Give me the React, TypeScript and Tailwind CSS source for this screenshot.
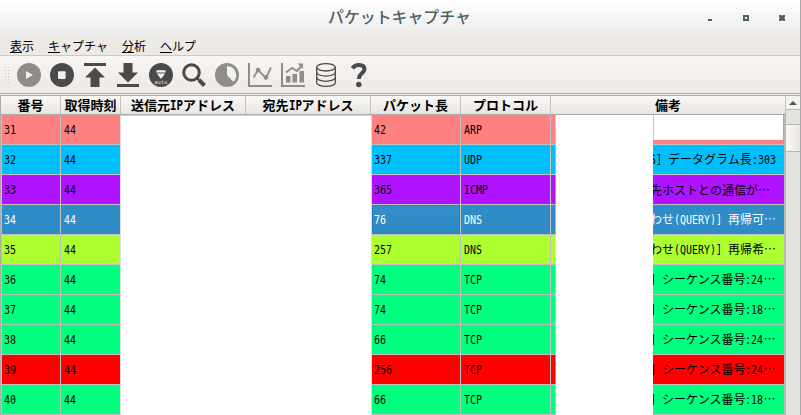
import React from "react";

const LATIN = /([\x20-\x7e]+)/;

// Half-width characters take exactly half of a full-width cell.
function Mono({ text, size = 12, bold = false }: { text: string; size?: number; bold?: boolean }) {
  const advance = size / 2;
  return (
    <span className="whitespace-pre leading-none">
      {text.split(LATIN).filter(Boolean).map((run, i) =>
        LATIN.test(run) ? (
          <span key={i} className="inline-block" style={{ width: run.length * advance }}>
            <span
              className={`inline-block origin-left whitespace-pre leading-none font-['DejaVu_Sans_Mono',monospace] ${bold ? "scale-x-[0.771] text-[14px] font-bold" : "scale-x-[0.767] text-[13px]"}`}
            >
              {run}
            </span>
          </span>
        ) : (
          <span key={i}>{run}</span>
        )
      )}
    </span>
  );
}

type Row = { no: string; len: string; proto: string; note: string; bg: string; selected?: boolean };

const rows: Row[] = [
  { no: "31", len: "42", proto: "ARP", note: "", bg: "bg-[#ff8080]" },
  { no: "32", len: "337", proto: "UDP", note: "5] データグラム長:303", bg: "bg-[#00bfff]" },
  { no: "33", len: "365", proto: "ICMP", note: "先ホストとの通信が…", bg: "bg-[#b013ff]" },
  { no: "34", len: "76", proto: "DNS", note: "わせ(QUERY)] 再帰可…", bg: "bg-[#308cc6]", selected: true },
  { no: "35", len: "257", proto: "DNS", note: "わせ(QUERY)] 再帰希…", bg: "bg-[#adff2f]" },
  { no: "36", len: "74", proto: "TCP", note: "] シーケンス番号:24…", bg: "bg-[#00ff7f]" },
  { no: "37", len: "74", proto: "TCP", note: "] シーケンス番号:18…", bg: "bg-[#00ff7f]" },
  { no: "38", len: "66", proto: "TCP", note: "] シーケンス番号:24…", bg: "bg-[#00ff7f]" },
  { no: "39", len: "256", proto: "TCP", note: "] シーケンス番号:24…", bg: "bg-[#ff0000]" },
  { no: "40", len: "66", proto: "TCP", note: "] シーケンス番号:18…", bg: "bg-[#00ff7f]" },
];

const menus: [string, string][] = [["表", "示"], ["キ", "ャプチャ"], ["分", "析"], ["ヘ", "ルプ"]];

const headers: [string, string][] = [
  ["番号", "w-[60px]"],
  ["取得時刻", "w-[60px]"],
  ["送信元IPアドレス", "w-[125px]"],
  ["宛先IPアドレス", "w-[125px]"],
  ["パケット長", "w-[90px]"],
  ["プロトコル", "w-[90px]"],
  ["備考", "w-[235px]"],
];

const D = "#4a4a4a";
const G = "#8e8d89";

const icons: React.ReactNode[] = [
  <><circle cx="12" cy="12" r="12" fill={G} /><path d="M9 8v8l7-4z" fill="#f3f1ee" /></>,
  <><circle cx="12" cy="12" r="12" fill={D} /><rect x="8" y="8.3" width="7.6" height="7.6" rx="1" fill="#f3f1ee" /></>,
  <path d="M1 0h22v3H1zM12 4.500l10 10h-5.500V24h-9v-9.500H2z" fill={D} />,
  <path d="M1 21h22v3H1zM12 19.500l-10-10h5.500V0h9v9.500H22z" fill={D} />,
  <>
    <circle cx="12" cy="12" r="12" fill={D} />
    <path d="M7.500 7.200h9v2.200h-9zM7.800 10.500h8.400L12 16z" fill="#f3f1ee" />
    <text x="12" y="20.500" textAnchor="middle" fontSize="5" letterSpacing="0.300" fill="#f3f1ee" fontFamily="DejaVu Sans Mono">auto</text>
  </>,
  <><circle cx="9.500" cy="9.500" r="7.800" fill="none" stroke={D} strokeWidth="3" /><path d="M15 15l2 2" stroke={D} strokeWidth="2.500" /><path d="M17 17l5.500 5.500" stroke={D} strokeWidth="4" /></>,
  <><circle cx="12" cy="12" r="12" fill={G} /><path d="M12 3v9.300l6.500 6.500A9.300 9.300 0 0 0 12 3z" fill="#f3f1ee" /></>,
  <g stroke={G} fill={G}><path d="M1 0v23h23" fill="none" strokeWidth="2" /><path d="M5.500 14.500L10 7l8 8 5-10.500" fill="none" strokeWidth="1.800" /><circle cx="10" cy="7" r="1.900" /><circle cx="18" cy="14.500" r="1.900" /></g>,
  <><path d="M1 0v23h23" fill="none" stroke={G} strokeWidth="2" /><path d="M5 13h4.500v6.500H5zM11.500 11H16v8.500h-4.500zM18.500 8H23v11.500h-4.500z" fill={G} /><path d="M5 9.500l6-4.500 5 3 5-5.500" fill="none" stroke={G} strokeWidth="2" /><path d="M16.500 0.500H22V6z" fill={G} /></>,
  <g fill="none" stroke={D} strokeWidth="1.300"><ellipse cx="12" cy="4.300" rx="9.300" ry="3.700" /><path d="M2.700 4.300v15.400c0 2 4.200 3.700 9.300 3.700s9.300-1.700 9.300-3.700V4.300" /><path d="M2.700 9.400c0 2 4.200 3.700 9.300 3.700s9.300-1.700 9.300-3.700M2.700 14.600c0 2 4.200 3.700 9.300 3.700s9.300-1.700 9.300-3.700" /></g>,
  <><path d="M5.500 5.300C7 3 9.300 2 12 2c3.800 0 5.500 1.600 5.500 4.200 0 3.600-5.500 4.800-5.500 8.800v1" fill="none" stroke={D} strokeWidth="4" /><circle cx="11.800" cy="21.500" r="2.700" fill={D} /></>,
];

const cell = "h-full flex items-center border-r border-[#c0c0c0]";

export default function App() {
  return (
    <div lang="ja" className="flex h-[415px] w-[801px] flex-col overflow-hidden border-r border-[#aaa9a7] bg-[#f0edea] font-['Noto_Sans_CJK_JP',sans-serif] text-[12px] leading-none text-black">
      <header className="flex h-9 shrink-0 items-center bg-linear-to-b from-white to-[#ebebeb] text-[#4c6067]">
        <span className="w-[670px] pb-[3px] pl-[328px] text-[15.9px] font-medium leading-[32px]">パケットキャプチャ</span>
        <svg className="h-9 w-[130px]" viewBox="670 0 130 36" shapeRendering="crispEdges">
          <path d="M708 19h4v2h-4z" fill="#4c6067" />
          <path d="M708 21h4v1h-4z" fill="#fff" />
          <path d="M743 15h6v6h-6zM745 17v2h2v-2z" fillRule="evenodd" fill="#4c6067" />
          <path d="M779 15h6v6h-6z" fill="#96a2a6" />
          <path d="M779 15h2v1h2v-1h2v2h-1v2h1v2h-2v-1h-2v1h-2v-2h1v-2h-1z" fill="#4c6067" />
        </svg>
      </header>

      <nav className="flex h-5 shrink-0 items-start gap-[14px] border-b border-[#cbc9c6] bg-[#edeae6] pl-[10px] pt-[3px]">
        {menus.map(([k, rest]) => (
          <span key={k} className="flex text-black">
            <span className="h-[14px] border-b border-black leading-[13px]">{k}</span>
            <span className="leading-[13px]">{rest}</span>
          </span>
        ))}
      </nav>

      <div className="flex h-[38px] shrink-0 items-center gap-[9px] border-b border-[#aeaba8] bg-linear-to-b from-[#f8f5f2] to-[#ece9e6] pl-1">
        <svg className="-mr-[5px] h-[18px] w-[9px]" viewBox="0 0 9 18" shapeRendering="crispEdges">
          {[0, 3, 6, 9, 12, 15].map((y) => (
            <path key={y} d={`M1 ${y + 1}h1v1h-1zM4 ${y + 1}h1v1h-1z`} fill="#c3c0bd" />
          ))}
        </svg>
        {icons.map((icon, i) => (
          <svg key={i} className="size-6 shrink-0 overflow-visible" viewBox="0 0 24 24">{icon}</svg>
        ))}
      </div>

      <main className="mt-px flex min-h-0 grow border-l border-t border-[#aeaba8]">
        <section className="flex w-[785px] shrink-0 flex-col">
          <div className="flex h-[19px] shrink-0 border-b border-[#aaa7a4] bg-linear-to-b from-[#fbf9f7] to-[#e7e4e1]">
            {headers.map(([label, width]) => (
              <div key={label} className={`${width} flex shrink-0 items-center justify-center border-r border-[#c4c1be] pb-px text-[13px] font-bold`}>
                <Mono text={label} size={13} bold />
              </div>
            ))}
          </div>
          <div className="grow border-r-2 border-[#bab8b6] bg-white">
            {rows.map((r, i) => (
              <div key={r.no} className={`flex h-[30px] ${r.selected ? "text-white" : ""}`}>
                <div className={`flex w-[119px] shrink-0 border-b border-[#c0c0c0] ${r.bg}`}>
                  <div className={`${cell} w-[60px] border-l border-l-[#c0c0c0] pl-[2px]`}><Mono text={r.no} /></div>
                  <div className="flex items-center pl-[3px]"><Mono text="44" /></div>
                </div>
                <div className={`w-[252px] shrink-0 border-l border-r border-l-[#e2dddd] border-r-[#dcd8d8] bg-white ${i === 0 ? "border-t border-t-[#ffc5c5]" : ""}`} />
                <div className={`flex w-[184px] shrink-0 border-b border-[#c0c0c0] ${r.bg}`}>
                  <div className={`${cell} w-[89px] pl-[2px] ${r.selected ? "bg-linear-to-b from-[#3590ca] to-[#2d86bf] shadow-[inset_0_0_0_1px_#2a7fb8]" : ""}`}><Mono text={r.len} /></div>
                  <div className={`${cell} w-[90px] pl-[3px]`}><Mono text={r.proto} /></div>
                  <div className="ml-auto h-full w-px bg-white/40" />
                </div>
                <div className="w-[97px] shrink-0 bg-white" />
                <div className={`flex grow items-center overflow-hidden border-b border-[#c0c0c0] ${r.bg}`}>
                  {i === 0 ? (
                    <div className="mb-[4px] mr-px h-[25px] grow border-l border-[#ffb0b0] bg-white" />
                  ) : (
                    <div className="-ml-[3px] whitespace-nowrap"><Mono text={r.note} /></div>
                  )}
                </div>
              </div>
            ))}
          </div>
        </section>
        <aside className="flex grow flex-col bg-[#e4e2df]">
          <div className="flex h-[14px] shrink-0 items-center justify-center border-b border-[#bbb8b5] bg-[#f4f2ef]">
            <svg className="h-1 w-2" viewBox="0 0 8 4"><path d="M0 4l4-4 4 4z" fill="#555" /></svg>
          </div>
          <div className="mt-[14px] h-[28px] shrink-0 border-y border-[#b8b5b2] bg-linear-to-r from-[#faf9f7] to-[#eae7e4]" />
        </aside>
      </main>
    </div>
  );
}
